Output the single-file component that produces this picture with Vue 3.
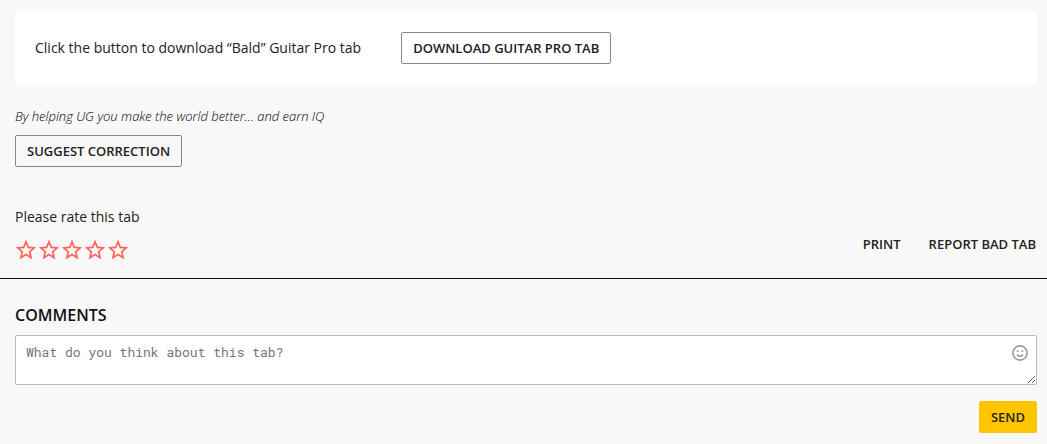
<template>
  <main class="page">
    <div class="content">
      <section class="download">
        <span>Click the button to download “Bald” Guitar Pro tab</span>
        <button type="button" class="btn">DOWNLOAD GUITAR PRO TAB</button>
      </section>

      <section class="suggest">
        <p class="hint">By helping UG you make the world better… and earn IQ</p>
        <button type="button" class="btn">SUGGEST CORRECTION</button>
      </section>

      <section class="feedback">
        <div>
          <p id="rate-label" class="rate-label">Please rate this tab</p>
          <div class="stars" role="group" aria-labelledby="rate-label">
            <button
              v-for="n in 5"
              :key="n"
              type="button"
              class="star"
              :aria-label="`Rate ${n} out of 5`"
              @click="rating = n"
            >
              <svg viewBox="1 1 22 22" aria-hidden="true">
                <path v-if="n <= rating" d="M22 9.2L14.8 8.6L12 2L9.2 8.6L2 9.2L7.5 14L5.8 21.5L12 17.5L18.2 21.5L16.5 14Z" />
                <path v-else fill-rule="evenodd" d="M22.2 9.2L14.9 8.6L12 1.6L9.1 8.6L1.8 9.2L7.3 14L5.7 21.5L12 17.6L18.3 21.5L16.7 14ZM12 15.5L8.3 17.8L9.2 13.4L5.9 10.6L10.3 10.2L12 6L13.7 10.2L18.1 10.6L14.8 13.4L15.7 17.8Z" />
              </svg>
            </button>
          </div>
        </div>
        <nav class="links">
          <a href="#print">PRINT</a>
          <a href="#report">REPORT BAD TAB</a>
        </nav>
      </section>
    </div>

    <form class="comments" @submit.prevent="send">
      <h2><label for="comment">COMMENTS</label></h2>
      <div class="field">
        <textarea id="comment" v-model="comment" placeholder="What do you think about this tab?"></textarea>
        <button type="button" class="emoji" aria-label="Insert emoji" @click="comment += '🙂'">
          <svg viewBox="0 0 16 16" aria-hidden="true">
            <circle cx="8" cy="8" r="7.1" fill="none" stroke="#999" stroke-width="1.6" />
            <circle cx="5.6" cy="6.2" r="1" fill="#999" />
            <circle cx="10.4" cy="6.2" r="1" fill="#999" />
            <path d="M5 9.9Q8 12.7 11 9.9" fill="none" stroke="#999" stroke-width="1.5" />
          </svg>
        </button>
      </div>
      <button type="submit" class="send">SEND</button>
    </form>
  </main>
</template>

<script setup>
import { ref } from 'vue'

const rating = ref(0)
const comment = ref('')

function send() {
  comment.value = ''
}
</script>

<style>
body {
  background: #f8f8f8;
}
</style>

<style scoped>
.page {
  padding: 12px 0 11px;
  color: #222;
  font-family: 'Open Sans', sans-serif;
  font-size: 14px;
  line-height: 20px;
}

.content,
.comments {
  padding: 0 10px 0 15px;
}

.content {
  border-bottom: 1px solid #111;
}

.download {
  display: flex;
  align-items: center;
  gap: 40px;
  padding: 20px;
  background: #fff;
}

.btn,
.send {
  box-sizing: border-box;
  height: 32px;
  padding: 0 11px;
  border: 1px solid #888;
  border-radius: 2px;
  background: transparent;
  color: #222;
  font: 600 13px/20px 'Open Sans', sans-serif;
  cursor: pointer;
}

.suggest {
  padding: 24px 0 40px;
}

.hint {
  margin: 0 0 11px;
  color: #000;
  font-size: 13px;
  line-height: 16px;
  font-style: italic;
  font-weight: 300;
}

.feedback {
  display: flex;
  justify-content: space-between;
  align-items: flex-end;
}

.rate-label {
  margin: 0 0 12px;
}

.stars {
  display: flex;
  gap: 1px;
  padding-bottom: 17px;
}

.star {
  width: 22px;
  height: 22px;
  padding: 0;
  border: 0;
  background: none;
  cursor: pointer;
}

.star svg {
  display: block;
  fill: #ff6459;
}

.links {
  display: flex;
  gap: 28px;
  padding: 0 1px 24px 0;
}

.links a {
  color: #222;
  font-size: 13px;
  font-weight: 600;
  text-decoration: none;
}

.comments {
  display: flex;
  flex-direction: column;
}

h2 {
  margin: 24px 0 8px;
  color: #111;
  font-size: 16px;
  line-height: 24px;
  font-weight: 600;
}

.field {
  position: relative;
  display: flex;
}

textarea {
  box-sizing: border-box;
  width: 100%;
  height: 50px;
  padding: 8px 40px 8px 10px;
  border: 1px solid #bbb;
  border-radius: 2px;
  background: #fff;
  color: #222;
  font: 13px/16px 'Roboto Mono', 'Liberation Mono', monospace;
  resize: vertical;
}

textarea::placeholder {
  color: #757575;
}

.emoji {
  position: absolute;
  top: 10px;
  right: 9px;
  width: 16px;
  height: 16px;
  padding: 0;
  border: 0;
  background: none;
  cursor: pointer;
}

.emoji svg {
  display: block;
}

.send {
  align-self: flex-end;
  margin-top: 16px;
  border-color: #ffc600;
  background: #ffc600;
}
</style>
